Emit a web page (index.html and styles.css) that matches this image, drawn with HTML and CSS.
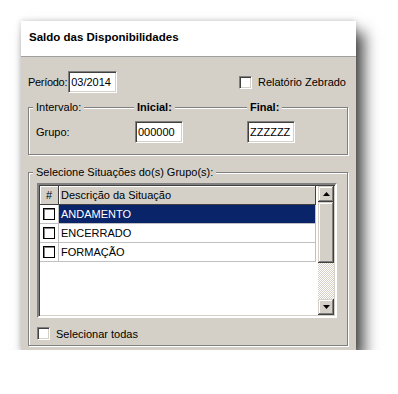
FILE: index.html
```html
<!DOCTYPE html>
<html lang="pt-BR">
<head>
  <meta charset="UTF-8" />
  <title>Saldo das Disponibilidades</title>
  <link rel="stylesheet" href="styles.css">
</head>
<body>
  <div class="window">
    <div class="title">Saldo das Disponibilidades</div>

    <div class="body">
      <div class="top-row">
        <span class="lbl-periodo">Período:</span>
        <input type="text" class="edit periodo" value="03/2014" />
        <label class="check zebrado"><span class="box"></span>Relatório Zebrado</label>
      </div>

      <div class="group intervalo">
        <div class="group-head cols">
          <span class="cap cap-first">Intervalo:</span>
          <span class="cap cap-bold cap-ini">Inicial:</span>
          <span class="cap cap-bold cap-fim">Final:</span>
        </div>
        <div class="cols group-row">
          <span>Grupo:</span>
          <input type="text" class="edit codigo" value="000000" />
          <input type="text" class="edit codigo" value="ZZZZZZ" />
        </div>
      </div>

      <div class="group situacoes">
        <div class="group-head">
          <span class="cap cap-first">Selecione Situações do(s) Grupo(s):</span>
        </div>

        <div class="list">
          <div class="grid">
            <div class="grid-row head">
              <div class="cell num">#</div>
              <div class="cell desc">Descrição da Situação</div>
            </div>
            <div class="grid-row selected">
              <div class="cell num"><span class="tick"></span></div>
              <div class="cell desc">ANDAMENTO</div>
            </div>
            <div class="grid-row">
              <div class="cell num"><span class="tick"></span></div>
              <div class="cell desc">ENCERRADO</div>
            </div>
            <div class="grid-row">
              <div class="cell num"><span class="tick"></span></div>
              <div class="cell desc">FORMAÇÃO</div>
            </div>
          </div>
          <div class="scroll">
            <div class="btn">
              <svg width="7" height="4" viewBox="0 0 7 4"><path d="M3.5 0 L7 4 L0 4 Z" fill="#000"/></svg>
            </div>
            <div class="thumb"></div>
            <div class="track"></div>
            <div class="btn">
              <svg width="7" height="4" viewBox="0 0 7 4"><path d="M0 0 L7 0 L3.5 4 Z" fill="#000"/></svg>
            </div>
          </div>
        </div>

        <label class="check todas"><span class="box"></span>Selecionar todas</label>
      </div>
    </div>
  </div>
</body>
</html>
```

FILE: styles.css
```css
* {
  box-sizing: border-box;
}

body {
  margin: 0;
  padding: 21px 0 0 21px;
  background: #fff;
  font-family: 'Liberation Sans', Arial, sans-serif;
  font-size: 11px;
  color: #000;
}

.window {
  width: 335px;
  height: 329px;
  background: #d4d0c8;
  display: flex;
  flex-direction: column;
  box-shadow: 8px 11px 14px rgba(0,0,0,0.7), 0 0 6px rgba(0,0,0,0.2);
}

.title {
  height: 36px;
  background: #fff;
  border-bottom: 1px solid #a0a0a0;
  padding: 0 0 3px 8px;
  display: flex;
  align-items: center;
  font-size: 11.5px;
  font-weight: bold;
}

.body {
  padding: 14px 8px 0 7px;
  display: flex;
  flex-direction: column;
}

/* sunken edit box */
.edit {
  height: 22px;
  margin: 0;
  padding: 0 2px;
  border: 1px solid;
  border-color: #808080 #fff #fff #808080;
  box-shadow: inset 1px 1px 0 #404040, inset -1px -1px 0 #d4d0c8;
  background: #fff;
  font: inherit;
  color: #000;
  outline: none;
}

.top-row {
  display: flex;
  align-items: center;
  height: 22px;
}

.lbl-periodo {
  letter-spacing: -0.3px;
  margin-right: 1px;
}

.periodo {
  width: 49px;
}

.check {
  display: flex;
  align-items: center;
  gap: 6px;
}

.box {
  width: 13px;
  height: 13px;
  background: #fff;
  border: 1px solid;
  border-color: #808080 #fff #fff #808080;
  box-shadow: inset 1px 1px 0 #404040, inset -1px -1px 0 #d4d0c8;
}

.zebrado {
  margin-left: auto;
  margin-right: 2px;
}

/* etched group box */
.group {
  border: 1px solid #808080;
  box-shadow: inset 1px 1px 0 #fff, 1px 1px 0 #fff;
  display: flex;
  flex-direction: column;
}

.group-head {
  height: 13px;
  line-height: 13px;
  margin-top: -7px;
  display: flex;
}

.cap {
  background: #d4d0c8;
  padding: 0 3px;
}

.cap-first {
  margin-left: 4px;
}

.cap-bold {
  font-weight: bold;
}

.cols {
  display: grid;
  grid-template-columns: 99px 112px auto;
  align-items: center;
}

.intervalo {
  margin-top: 14px;
  padding-bottom: 11px;
}

.intervalo .group-head .cap-first {
  justify-self: start;
  margin-left: -3px;
}

.intervalo .group-head {
  padding-left: 7px;
}

.cap-ini {
  justify-self: start;
  margin-left: -1px;
}

.cap-fim {
  justify-self: start;
}

.group-row {
  margin-top: 7px;
  padding-left: 7px;
}

.codigo {
  width: 48px;
}

.situacoes {
  margin-top: 17px;
  padding: 0 0 5px 8px;
  flex: 1;
}

.situacoes .group-head {
  margin-left: -8px;
}

/* list with grid */
.list {
  margin-top: 4px;
  width: 300px;
  height: 135px;
  border: 2px solid;
  border-color: #808080 #fff #fff #808080;
  box-shadow: inset 1px 1px 0 #404040, inset -1px -1px 0 #d4d0c8;
  background: #fff;
  display: flex;
  padding: 1px;
}

.grid {
  flex: 1;
}

.grid-row {
  display: flex;
  height: 19px;
  width: 276px;
}

.cell {
  display: flex;
  align-items: center;
  border-right: 1px solid #c0c0c0;
  border-bottom: 1px solid #c0c0c0;
}

.num {
  width: 19px;
  justify-content: center;
}

.desc {
  flex: 1;
  padding-left: 2px;
}

.head .cell {
  background: #d4d0c8;
  border-color: #404040;
  box-shadow: inset 1px 1px 0 #fff;
}

.selected .desc {
  background: #0a246a;
  color: #fff;
}

.tick {
  width: 12px;
  height: 12px;
  border: 1px solid #000;
  box-shadow: inset 1px 1px 0 #808080;
  background: #fff;
}

.scroll {
  width: 16px;
  display: flex;
  flex-direction: column;
}

.btn,
.thumb {
  background: #d4d0c8;
  box-shadow: inset -1px -1px 0 #404040, inset 1px 1px 0 #d4d0c8, inset -2px -2px 0 #808080, inset 2px 2px 0 #fff;
}

.btn {
  height: 16px;
  display: flex;
  align-items: center;
  justify-content: center;
}

.thumb {
  height: 61px;
}

.track {
  flex: 1;
  background: repeating-conic-gradient(#fff 0 25%, #d4d0c8 0 50%) 0 0 / 2px 2px;
}

.todas {
  margin-top: 9px;
}
```
